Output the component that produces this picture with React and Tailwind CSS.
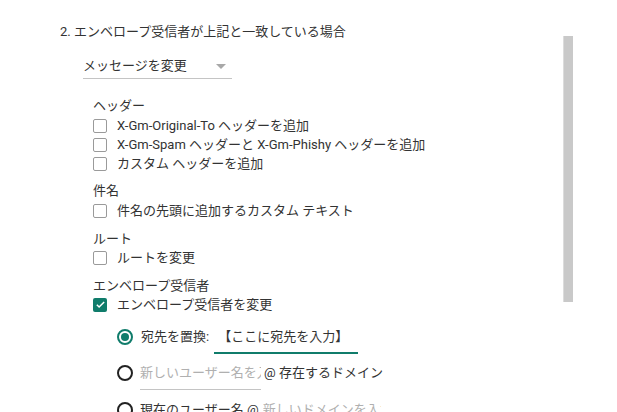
import React from "react";

function Box({ checked }) {
  if (checked) {
    return (
      <span className="w-[14px] h-[14px] rounded-[2px] bg-[#107c6b] flex items-center justify-center shrink-0">
        <svg width="11" height="11" viewBox="0 0 24 24">
          <path d="M4 12.5l5 5L20 6.5" fill="none" stroke="#fff" strokeWidth="3.2" />
        </svg>
      </span>
    );
  }
  return <span className="w-[14px] h-[14px] rounded-[2px] border-[1.5px] border-[#9a9a9a] shrink-0" />;
}

function Check({ label, checked, className = "" }) {
  return (
    <div className={"flex items-center gap-[10px] h-[19px] " + className}>
      <Box checked={checked} />
      <span>{label}</span>
    </div>
  );
}

function Radio({ on }) {
  return (
    <span
      className={
        "w-[16px] h-[16px] rounded-full border-2 flex items-center justify-center shrink-0 " +
        (on ? "border-[#107c6b]" : "border-[#222]")
      }
    >
      {on && <span className="w-[8px] h-[8px] rounded-full bg-[#107c6b]" />}
    </span>
  );
}

export default function App() {
  return (
    <div
      className="relative w-[617px] h-[412px] overflow-hidden bg-white text-[13px] leading-[19px] text-[#333]"
      style={{ fontFamily: '"Roboto", "Noto Sans CJK JP", sans-serif' }}
    >
      <div className="pl-[60px] pt-[22px]">
        <div>2. エンベロープ受信者が上記と一致している場合</div>

        {/* dropdown */}
        <div className="ml-[23px] mt-[15px] w-[149px] flex items-center justify-between border-b border-[#c4c4c4] pb-[3px]">
          <span>メッセージを変更</span>
          <svg width="10" height="6" viewBox="0 0 10 6" className="mr-[6px] mt-[2px]">
            <path d="M0 0h10L5 5z" fill="#a8a8a8" />
          </svg>
        </div>

        <div className="ml-[33px]">
          <div className="mt-[17px]">ヘッダー</div>
          <Check className="mt-px" label="X-Gm-Original-To ヘッダーを追加" />
          <Check label="X-Gm-Spam ヘッダーと X-Gm-Phishy ヘッダーを追加" />
          <Check label="カスタム ヘッダーを追加" />

          <div className="mt-[8px]">件名</div>
          <Check className="mt-px" label="件名の先頭に追加するカスタム テキスト" />

          <div className="mt-[9px]">ルート</div>
          <Check label="ルートを変更" />

          <div className="mt-[9px]">エンベロープ受信者</div>
          <Check label="エンベロープ受信者を変更" checked />

          <div className="ml-[24px]">
            {/* radio 1 */}
            <div className="mt-[13px] flex items-start">
              <div className="flex items-center h-[19px] gap-[8px]">
                <Radio on />
                <span>宛先を置換:</span>
              </div>
              <div className="ml-[5px] w-[144px] border-b-2 border-[#107c6b] pb-[6px] pl-[4px]">
                【ここに宛先を入力】
              </div>
            </div>

            {/* radio 2 */}
            <div className="mt-[9px] flex items-start">
              <div className="flex items-center h-[19px]">
                <Radio />
              </div>
              <div className="ml-[7px] w-[121px] border-b border-[#c4c4c4] pb-[7px] text-[#b0b0b0] whitespace-nowrap overflow-hidden">
                新しいユーザー名を入力
              </div>
              <span className="ml-[3px]">@ 存在するドメイン</span>
            </div>

            {/* radio 3 */}
            <div className="mt-[10px] flex items-start">
              <div className="flex items-center h-[19px]">
                <Radio />
              </div>
              <span className="ml-[7px]">現在のユーザー名 @</span>
              <span className="ml-[4px] text-[#b0b0b0] w-[118px] overflow-hidden whitespace-nowrap">
                新しいドメインを入力
              </span>
            </div>
          </div>
        </div>
      </div>

      {/* scrollbar thumb */}
      <div className="absolute left-[563px] top-[36px] w-[10px] h-[266px] bg-[#c9c9c9] border-l border-[#dcdcdc]" />
    </div>
  );
}
